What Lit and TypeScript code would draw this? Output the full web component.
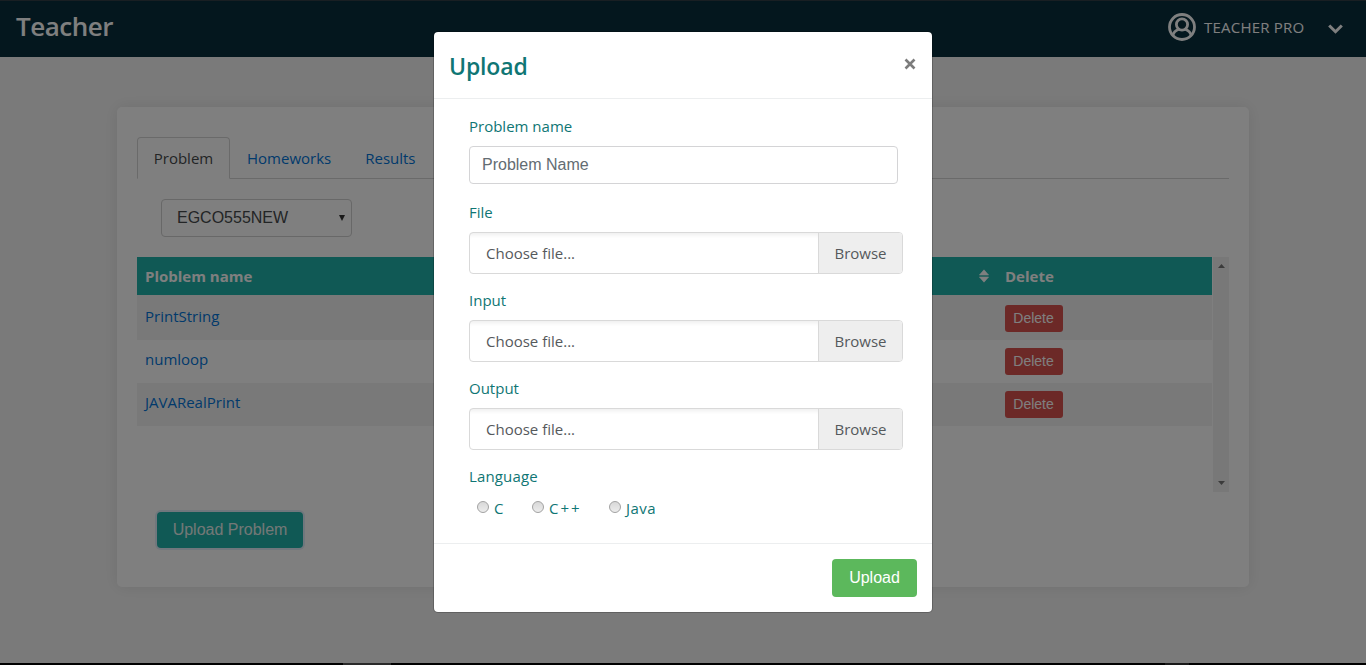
import { LitElement, html, css } from "lit";
import { customElement } from "lit/decorators.js";

const base = css`
  * { box-sizing: border-box; }
  :host { font-family: "Open Sans", "Noto Sans", sans-serif; font-size: 15px; line-height: 24px; }
`;

@customElement("top-bar")
class TopBar extends LitElement {
  static styles = [base, css`
    :host { display: block; }
    .bar { display: flex; justify-content: space-between; height: 57px; padding: 0 23px 0 16px; background: #082e3c; border-top: 1px solid #333f46; color: #fff; }
    .brand { font-size: 26px; font-weight: 600; line-height: 36px; padding-top: 7px; letter-spacing: -0.5px; }
    .user { display: flex; align-items: center; height: 50px; }
    .avatar { display: block; width: 28px; height: 28px; margin: 1px 8px 0 0; }
    .name { font-size: 15px; width: 124px; white-space: nowrap; padding-top: 1px; letter-spacing: 0.22px; }
    .chev { display: block; width: 15px; height: 10px; margin-top: 5px; }
  `];
  render() {
    return html`<div class="bar">
      <div class="brand">Teacher</div>
      <div class="user">
        <svg class="avatar" viewBox="0 0 28 28" fill="none" stroke="#fff" stroke-width="2.8">
          <circle cx="14" cy="14" r="12.5"></circle>
          <circle cx="14" cy="11.5" r="5.6"></circle>
          <path d="M4.8 22.3C5.8 18.6 8 17.2 10.7 16.2M23.2 22.3C22.2 18.6 20 17.2 17.3 16.2"></path>
        </svg>
        <span class="name">TEACHER PRO</span>
        <svg class="chev" viewBox="0 0 15 10" fill="none" stroke="#fff" stroke-width="3"><path d="M1.2 1.5L7.5 7.7L13.8 1.5"></path></svg>
      </div>
    </div>`;
  }
}

@customElement("problem-panel")
class ProblemPanel extends LitElement {
  static styles = [base, css`
    :host { display: block; }
    .card { height: 480px; padding: 30px 20px; background: #fff; border-radius: 5px; box-shadow: 0 0 16px rgba(0,0,0,.09); }
    .tabs { display: flex; height: 42px; border-bottom: 1px solid #d5d5d5; }
    .tab { height: 42px; padding: 9px 17px; color: #0275d8; white-space: nowrap; }
    .tab.active { width: 93px; padding: 8px 0 0; text-align: center; border: 1px solid #d5d5d5; border-bottom-color: #fff; border-radius: 4px 4px 0 0; background: #fff; color: #464a4c; }
    .select { display: flex; align-items: center; justify-content: space-between; width: 191px; height: 38px; margin: 20px 0 20px 24px; padding: 0 6px 1px 15px; border: 1px solid #d0d0d0; border-radius: 4px; font: 16px/24px "Liberation Sans", sans-serif; color: #464a4c; }
    .arrow { display: block; width: 6px; height: 6px; }
    .scroller { display: flex; justify-content: space-between; height: 235px; }
    .table { width: 1075px; }
    .row { display: grid; grid-template-columns: 1fr 207px; height: 43px; padding: 8px 0 0 8px; }
    .head { height: 38px; padding-top: 7px; background: #20b2aa; color: #fff; font-weight: 700; }
    .first { height: 45px; padding-top: 10px; }
    .shade { background: #f2f2f2; }
    .main { display: flex; justify-content: space-between; padding-right: 16px; }
    .sort { display: block; width: 10px; height: 14px; margin-top: 5px; }
    .link { color: #0275d8; margin-top: -1px; }
    .del { display: block; width: 58px; height: 27px; padding: 0 1px 1px 0; border: 0; border-radius: 3px; background: #d9534f; color: #fff; font: 14px/24px "Liberation Sans", sans-serif; }
    .track { display: flex; flex-direction: column; justify-content: space-between; align-items: center; width: 16px; padding: 7px 0 7px; background: #f1f1f1; }
    .tri { display: block; width: 7px; height: 4px; }
    .go { display: block; width: 146px; height: 36px; margin: 20px 0 0 20px; padding: 0 0 1px; border: 0; border-radius: 4px; background: #20b2aa; box-shadow: 0 0 0 2px rgba(2,117,216,.12); color: #e6f0ee; font: 16px/34px "Liberation Sans", sans-serif; }
  `];
  render() {
    const names = ["PrintString", "numloop", "JAVARealPrint"];
    return html`<div class="card">
      <div class="tabs">
        <div class="tab active">Problem</div>
        <div class="tab">Homeworks</div>
        <div class="tab">Results</div>
      </div>
      <div class="select"><span>EGCO555NEW</span><svg class="arrow" viewBox="0 0 6 6"><path d="M0 0H6L3 6Z" fill="#333"></path></svg></div>
      <div class="scroller">
        <div class="table">
          <div class="row head">
            <div class="main"><span>Ploblem name</span>
              <svg class="sort" viewBox="0 0 10 14" fill="#fff"><path d="M5 .8L9.6 6H.4ZM5 13.2L9.6 8H.4Z" stroke="#fff" stroke-width=".6" stroke-linejoin="round"></path></svg>
            </div>
            <span>Delete</span>
          </div>
          ${names.map((n, i) => html`<div class="row ${i === 0 ? "first" : ""} ${i % 2 ? "" : "shade"}">
            <span class="link">${n}</span><button class="del">Delete</button>
          </div>`)}
        </div>
        <div class="track">
          <svg class="tri" viewBox="0 0 7 4"><path d="M0 4L3.5 0L7 4Z" fill="#777"></path></svg>
          <svg class="tri" viewBox="0 0 7 4"><path d="M0 0L3.5 4L7 0Z" fill="#777"></path></svg>
        </div>
      </div>
      <button class="go">Upload Problem</button>
    </div>`;
  }
}

@customElement("upload-dialog")
class UploadDialog extends LitElement {
  static styles = [base, css`
    :host { display: block; }
    .dialog { width: 500px; height: 582px; border: 1px solid rgba(0,0,0,.2); border-radius: 5px; background: #fff; background-clip: padding-box; color: #0f7674; display: flex; flex-direction: column; }
    .head { display: flex; justify-content: space-between; height: 67px; padding: 16px 15px 0; border-bottom: 1px solid #eceeef; }
    .title { font-size: 23px; font-weight: 600; line-height: 36px; letter-spacing: -0.15px; }
    .close { display: block; width: 12px; height: 12px; margin: 10px 1px 0 0; }
    .body { flex: 1; padding: 15px 29px 0 35px; }
    .label { height: 24px; margin-bottom: 8px; }
    .lang { letter-spacing: 0.15px; }
    .text { display: block; width: 429px; height: 38px; margin-bottom: 16px; padding: 0 12px 1px; border: 1px solid #d4d4d6; border-radius: 4px; font: 16px/24px "Liberation Sans", sans-serif; color: #464a4c; outline: 0; }
    .text::placeholder { color: #636c72; opacity: 1; }
    .file { display: flex; height: 42px; margin-bottom: 14px; border: 1px solid #d9d9d9; border-radius: 4px; color: #55595c; overflow: hidden; line-height: 41px; }
    .pick { flex: 1; padding-left: 16px; box-shadow: inset 0 5px 4px -3px rgba(0,0,0,.07); }
    .browse { width: 84px; border-left: 1px solid #d9d9d9; background: #eee; text-align: center; }
    .langs { display: flex; padding-left: 8px; }
    .opt { display: flex; align-items: flex-start; white-space: nowrap; }
    .radio { width: 12px; height: 12px; margin: 5px 5px 0 0; border: 1px solid #a2a2a2; border-radius: 50%; background: linear-gradient(#d8d8d8, #ececec); }
    .c { width: 55px; }
    .cpp { width: 77px; letter-spacing: 2px; }
    .java { letter-spacing: 0.5px; }
    .foot { display: flex; justify-content: flex-end; height: 69px; padding: 15px; border-top: 1px solid #eceeef; }
    .send { width: 85px; height: 38px; padding: 0 0 1px; border: 0; border-radius: 4px; background: #5cb85c; color: #fff; font: 16px/36px "Liberation Sans", sans-serif; }
  `];
  render() {
    return html`<div class="dialog">
      <div class="head"><div class="title">Upload</div>
        <svg class="close" viewBox="0 0 12 12" stroke="#7c7c7c" stroke-width="2.6"><path d="M1.5 1.5L10.5 10.5M10.5 1.5L1.5 10.5"></path></svg>
      </div>
      <div class="body">
        <div class="label">Problem name</div>
        <input class="text" placeholder="Problem Name">
        ${["File", "Input", "Output"].map((l) => html`
          <div class="label">${l}</div>
          <div class="file"><div class="pick">Choose file...</div><div class="browse">Browse</div></div>`)}
        <div class="label lang">Language</div>
        <div class="langs">
          <div class="opt c"><i class="radio"></i>C</div>
          <div class="opt cpp"><i class="radio"></i>C++</div>
          <div class="opt java"><i class="radio"></i>Java</div>
        </div>
      </div>
      <div class="foot"><button class="send">Upload</button></div>
    </div>`;
  }
}

@customElement("app-root")
class AppRoot extends LitElement {
  static styles = [base, css`
    :host { display: block; position: relative; height: 665px; overflow: hidden; }
    .page { display: flex; flex-direction: column; height: 665px; background: #f5f5f5; }
    .content { flex: 1; padding: 50px 117px 0; }
    .strip { display: flex; justify-content: space-between; height: 2px; padding: 0 177px 0 343px; background: #000; }
    .seg { width: 48px; background: #555; }
    .seg.short { width: 24px; background: #333; }
    .overlay { position: absolute; inset: 0; display: flex; justify-content: center; align-items: flex-start; padding-top: 31px; background: rgba(0,0,0,.5); }
  `];
  render() {
    return html`<div class="page">
        <top-bar></top-bar>
        <div class="content"><problem-panel></problem-panel></div>
        <div class="strip"><div class="seg"></div><div class="seg short"></div></div>
      </div>
      <div class="overlay"><upload-dialog></upload-dialog></div>`;
  }
}
